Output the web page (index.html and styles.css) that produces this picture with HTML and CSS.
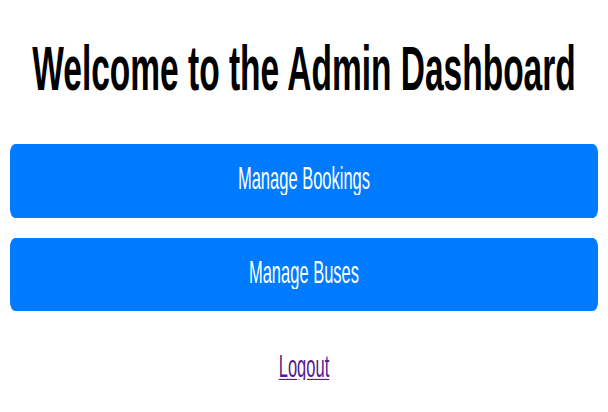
FILE: index.html
```html
<!DOCTYPE html>
<html lang="en">
<head>
<meta charset="utf-8">
<title>Admin Dashboard</title>
<link rel="stylesheet" href="styles.css">
</head>
<body>
<main class="page">
  <h1 class="title"><span class="tall title-text">Welcome to the Admin Dashboard</span></h1>
  <nav class="actions">
    <a class="btn" href="#"><span class="tall btn-text">Manage Bookings</span></a>
    <a class="btn" href="#"><span class="tall btn-text">Manage Buses</span></a>
  </nav>
  <p class="logout-row"><a class="tall logout" href="#">Logout</a></p>
</main>
</body>
</html>
```
FILE: styles.css
```css
html, body {
  margin: 0;
  padding: 0;
  background: #ffffff;
}

body {
  font-family: "Liberation Sans", Arial, sans-serif;
  color: #000000;
}

.page {
  padding: 0 10px;
}

/* the reference capture is stretched vertically: glyphs are drawn taller than wide */
.tall {
  display: inline-block;
  line-height: 1;
  transform-origin: 50% 84.6%;
}

.title {
  margin: 0;
  padding-top: 62px;
  font-size: 33.5px;
  line-height: 33.5px;
  font-weight: bold;
  text-align: center;
}

.title-text {
  transform: scaleY(1.9);
}

.actions {
  margin-top: 48.5px;
  display: flex;
  flex-direction: column;
  gap: 20px;
}

.btn {
  display: block;
  height: 73.5px;
  box-sizing: border-box;
  padding-top: 5px;
  font-size: 16.5px;
  line-height: 68.5px;
  background: #007bff;
  color: #ffffff;
  text-align: center;
  text-decoration: none;
  border-radius: 5px / 9px;
}

.btn-text {
  transform: scaleY(1.86);
}

.logout-row {
  margin: 0;
  padding-top: 52px;
  font-size: 16.5px;
  line-height: 16.5px;
  text-align: center;
}

.logout {
  color: #551a8b;
  text-decoration: underline;
  transform: scaleY(1.85);
}
```
